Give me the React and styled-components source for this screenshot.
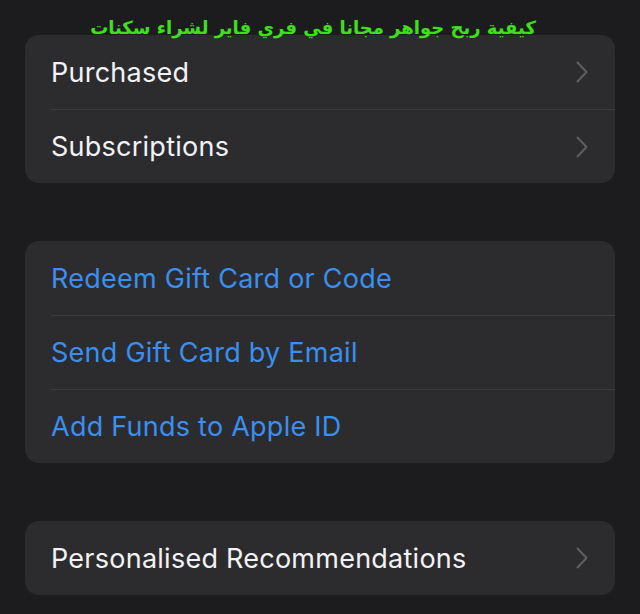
import React from "react";
import styled, { createGlobalStyle } from "styled-components";

const Global = createGlobalStyle`
  html, body {
    margin: 0;
    padding: 0;
    background: #1c1c1e;
  }
  body {
    font-family: Inter, "Liberation Sans", sans-serif;
  }
`

const Page = styled.main`
  position: relative;
  width: 640px;
  height: 614px;
  box-sizing: border-box;
  padding: 35px 25px 0 25px;
  display: flex;
  flex-direction: column;
  gap: 58px;
  overflow: hidden;
`

const Caption = styled.div`
  position: absolute;
  top: 13px;
  left: 0;
  right: 0;
  text-align: center;
  direction: rtl;
  color: #3ee01a;
  font-family: "DejaVu Sans", sans-serif;
  font-weight: bold;
  font-size: 18px;
  line-height: 30px;
  padding-right: 14px;
  z-index: 2;
`

const Group = styled.section`
  background: #2c2c2e;
  border-radius: 14px;
  display: flex;
  flex-direction: column;
`

const Row = styled.div`
  box-sizing: border-box;
  height: 74px;
  display: flex;
  align-items: center;
  padding-left: 26px;
  padding-right: 27px;
  color: ${(p) => (p.link ? "#3a8ff0" : "#f2f2f7")};
  font-size: 27px;
  letter-spacing: 0.25px;

  & + & {
    border-top: 1px solid #3d3d40;
    margin-left: 26px;
    padding-left: 0;
  }
`

const Label = styled.span`
  flex: 1;
`

const Chevron = () => (
  <svg width="12" height="22" viewBox="0 0 12 22">
    <path d="M1.5 1.5 L10.5 11 L1.5 20.5" fill="none" stroke="#5e5e63" strokeWidth="2" strokeLinecap="round" strokeLinejoin="round" />
  </svg>
);

const Item = ({ label, link, arrow }) => (
  <Row link={link ? 1 : 0}>
    <Label>{label}</Label>
    {arrow && <Chevron />}
  </Row>
);

const App = () => (
  <>
    <Global />
    <Page>
      <Caption>كيفية ربح جواهر مجانا في فري فاير لشراء سكنات</Caption>
      <Group>
        <Item label="Purchased" arrow />
        <Item label="Subscriptions" arrow />
      </Group>
      <Group>
        <Item label="Redeem Gift Card or Code" link />
        <Item label="Send Gift Card by Email" link />
        <Item label="Add Funds to Apple ID" link />
      </Group>
      <Group>
        <Item label="Personalised Recommendations" arrow />
      </Group>
    </Page>
  </>
);

export default App;
